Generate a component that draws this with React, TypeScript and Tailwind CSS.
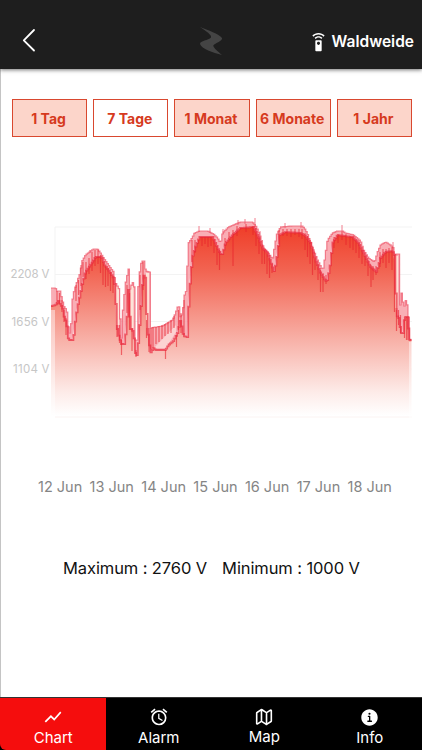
import React, { useState } from "react";
import { MdAccessAlarm, MdSettingsRemote, MdShowChart } from "react-icons/md";
import { IoInformationCircle, IoMapOutline } from "react-icons/io5";

type Point = [number, number];

const ranges = ["1 Tag", "7 Tage", "1 Monat", "6 Monate", "1 Jahr"];
const days = ["12 Jun", "13 Jun", "14 Jun", "15 Jun", "16 Jun", "17 Jun", "18 Jun"];

const tabs = [
  { label: "Chart", icon: MdShowChart, iconClass: "w-5 h-5", labelClass: "mt-px" },
  { label: "Alarm", icon: MdAccessAlarm, iconClass: "w-5 h-5", labelClass: "mt-px" },
  {
    label: "Map",
    icon: IoMapOutline,
    iconClass: "w-[18px] h-[18px] my-px [&_path]:stroke-[46px]",
    labelClass: "",
  },
  { label: "Info", icon: IoInformationCircle, iconClass: "w-[21px] h-[21px] -mb-px", labelClass: "mt-px" },
];

// Highest voltage per interval
const upper: Point[] = [
  [51, 288], [55, 288], [56, 291], [60, 291], [61, 298], [64, 308], [66, 309],
  [67, 317], [68.3, 333], [70.4, 333], [71, 305], [73, 293], [77, 280],
  [80, 272], [81, 262], [85, 255], [90, 251], [93, 249], [97, 249], [100, 253],
  [103, 258], [108, 265], [113, 272], [115, 283], [119, 290], [120, 338],
  [121.5, 338], [122.5, 307], [125, 283], [128, 269], [129, 290], [132, 282],
  [134, 288], [135, 340], [136.5, 340], [137.5, 290], [139, 273], [141, 261],
  [144, 261], [145, 271], [149, 272], [149.5, 328], [162, 326], [172, 320],
  [175, 313], [178, 304], [180, 318], [182, 313], [184, 295], [186, 290],
  [187, 260], [188, 243], [192, 237], [194, 233], [199, 231], [207, 231],
  [213, 234], [217, 238], [220, 243], [222, 233], [228, 227], [235, 224],
  [240, 222], [252, 222], [256, 227], [260, 237], [263, 248], [267, 252],
  [272, 259], [274, 247], [276, 235], [280, 227], [292, 226], [302, 226],
  [305, 230], [307, 234], [312, 248], [317, 260], [322, 270], [323, 267],
  [325, 253], [327, 240], [332, 233], [337, 231], [342, 231], [345, 233],
  [353, 235], [360, 241], [363, 250], [368, 258], [374, 262], [377, 252],
  [380, 245], [385, 242], [390, 245], [393, 248], [394, 254], [398.5, 254],
  [399, 310], [401, 293], [402, 297], [403, 310], [405, 300], [407, 306],
  [408, 317], [408.5, 339], [411, 340],
];

// Lowest voltage per interval
const lower: Point[] = [
  [51, 306], [55, 305], [58, 301], [60, 305], [62, 307], [63, 315], [66, 323],
  [68, 340], [73, 340], [74, 327], [77, 307], [80, 293], [82, 283], [85, 272],
  [92, 262], [95, 257], [101, 257], [104, 265], [108, 270], [113, 278],
  [115, 290], [116, 325], [118, 335], [121, 344], [124, 344], [126, 328],
  [128, 290], [130, 328], [133, 332], [135, 353], [137, 356], [138, 340],
  [140, 315], [142, 285], [143, 275], [145, 278], [146, 310], [147, 330],
  [150, 353], [153, 348], [155, 350], [165, 350], [168, 345], [173, 341],
  [177, 333], [180, 320], [183, 336], [187, 337], [188, 310], [190, 277],
  [192, 257], [195, 247], [199, 237], [212, 237], [214, 241], [218, 250],
  [220, 254], [222, 254], [225, 243], [232, 235], [240, 228], [253, 227],
  [257, 235], [262, 248], [267, 253], [272, 267], [274, 272], [277, 253],
  [279, 235], [285, 232], [300, 233], [305, 236], [310, 243], [315, 260],
  [320, 273], [325, 281], [327, 280], [330, 263], [332, 243], [337, 235],
  [352, 237], [358, 243], [363, 253], [370, 267], [376, 272], [380, 258],
  [385, 252], [392, 251], [394, 255], [396, 310], [397, 318], [399, 318],
  [400, 333], [403, 333], [404, 317], [407.5, 317], [408.5, 340], [411, 340],
];

// Short voltage drops hanging below the curve: x, top, bottom
const drops: [number, number, number][] = [
  [57, 291, 305], [59.5, 293, 304], [62, 300, 312], [64, 310, 322], [66, 318, 335],
  [76, 285, 301], [78.5, 280, 295], [81, 265, 286], [83, 262, 277], [86, 262, 279],
  [89, 258, 274], [92, 252, 271], [95, 250, 266], [98, 250, 264], [100.5, 255, 273],
  [103, 262, 285], [105.5, 266, 287], [108, 268, 286], [110.5, 272, 291],
  [113, 276, 293], [117, 325, 337], [119.5, 325, 343], [121.5, 340, 355],
  [127, 285, 313], [129.5, 293, 330], [132, 328, 351], [136, 350, 357],
  [140, 275, 310], [143, 262, 290], [146.5, 320, 338], [149, 328, 352],
  [151, 328, 349], [153, 327, 348], [156, 327, 344], [159, 326, 342],
  [162, 325, 339], [165.5, 350, 359], [165, 324, 336], [168, 322, 334],
  [171, 320, 333], [174, 316, 328], [176.5, 335, 347], [178.5, 310, 330],
  [181, 313, 333], [184, 300, 335], [192, 240, 262], [195, 240, 253],
  [202, 237, 246], [205, 237, 244], [208, 237, 247], [211, 237, 246],
  [214, 239, 253], [217, 246, 265], [219.5, 250, 270], [225, 238, 246],
  [229, 232, 240], [233, 230, 266], [237, 226, 236], [246, 224, 232],
  [253, 226, 235], [256, 228, 246], [259, 236, 254], [262, 246, 264],
  [264.5, 250, 264], [267, 254, 274], [269.5, 258, 278], [272, 264, 273],
  [279, 230, 244], [283, 229, 236], [287, 229, 236], [291, 229, 237],
  [295, 229, 235], [299, 229, 237], [302, 229, 239], [305, 233, 250],
  [307.5, 236, 257], [310, 242, 264], [312.5, 249, 275], [315, 258, 270],
  [318, 264, 280], [320.5, 270, 292], [323, 273, 292], [326, 275, 284],
  [334, 237, 248], [338, 234, 243], [342, 232, 240], [346, 234, 245],
  [350, 236, 248], [353, 237, 250], [356, 240, 253], [359, 243, 258],
  [362, 250, 264], [365, 256, 266], [368, 260, 276], [371, 265, 287],
  [373, 266, 280], [376, 266, 275], [380, 252, 267], [383, 249, 263],
  [386, 249, 268], [389, 248, 263], [392, 247, 270], [394.5, 255, 312],
  [396.5, 310, 331], [398.5, 310, 325], [400.5, 315, 333], [404.5, 317, 338],
  [406.5, 317, 340], [408, 317, 340],
];

// Peaks that stick out above the curve
const peaks: [number, number, number][] = [
  [90, 250, 253], [199, 226, 232], [210, 228, 233], [223, 229, 234],
  [238, 220, 225], [245, 219, 224], [255, 218, 228], [260, 231, 240],
  [285, 223, 228], [301, 222, 228], [342, 225, 232], [393, 242, 250],
];

const sample = (points: Point[], x: number) => {
  const i = points.findIndex((p) => p[0] >= x);
  if (i <= 0) return points[0][1];
  const [x0, y0] = points[i - 1];
  const [x1, y1] = points[i];
  return y0 + ((y1 - y0) * (x - x0)) / (x1 - x0);
};

const stepPath = (points: Point[]) => {
  let d = `M51 ${sample(points, 51)}`;
  for (let x = 52.4; x < 411; x += 1.4) {
    d += `H${x.toFixed(1)}V${sample(points, x).toFixed(1)}`;
  }
  return `${d}H411.5`;
};

const stepPathBack = (points: Point[]) => {
  let d = "";
  for (let x = 411; x >= 51; x -= 1.4) {
    d += `L${x.toFixed(1)} ${sample(points, x).toFixed(1)}`;
  }
  return d;
};

const bars = (list: [number, number, number][]) =>
  list.map(([x, top, bottom]) => `M${x} ${top}V${bottom}`).join("");

function VoltageChart() {
  const upperPath = stepPath(upper);
  const lowerPath = stepPath(lower);

  return (
    <svg viewBox="0 200 422 240" className="block w-full h-[240px]">
      <defs>
        <linearGradient id="area" gradientUnits="userSpaceOnUse" x1="0" y1="222" x2="0" y2="422">
          <stop offset="0" stopColor="#ef3a24" />
          <stop offset="0.25" stopColor="#f26553" />
          <stop offset="0.6" stopColor="#f8b3aa" />
          <stop offset="0.85" stopColor="#fdebe8" />
          <stop offset="0.97" stopColor="#ffffff" />
        </linearGradient>
      </defs>

      <path d="M55 227H412M55 274.5H412M55 321.5H412M55 369H412M55 227V417" stroke="#f3f3f3" fill="none" />

      <g fontFamily="Inter, sans-serif" fontSize="11.5" fill="#c6c6c6" textAnchor="end">
        <text x="49.5" y="278" textLength="39">2208 V</text>
        <text x="49.5" y="325.5" textLength="38">1656 V</text>
        <text x="49.5" y="373" textLength="36.5">1104 V</text>
      </g>

      <path d={`${lowerPath}V422H51Z`} fill="url(#area)" />
      <path d={`${upperPath}${stepPathBack(lower)}Z`} fill="#f79aa3" fillOpacity="0.8" />
      <path d="M116 286H119V325H116ZM130.5 286H133.5V328H130.5ZM146 273H149V328H146ZM395.5 256H398V308H395.5Z" fill="#fde3d8" />
      <path d="M154 348L176 325L176 332L166 348Z" fill="#fcd3d2" />
      <path d="M55 417H412" stroke="#fbf3f2" />
      <path d="M51 310H55V422H51ZM409 342H412V422H409Z" fill="#fff" fillOpacity="0.45" />

      <path d={upperPath} fill="none" stroke="#ee5468" strokeOpacity="0.7" strokeWidth="1.2" />
      <path d={bars(peaks)} stroke="#ee5468" strokeOpacity="0.75" />
      <path d={bars(drops)} stroke="#e8202c" strokeOpacity="0.6" strokeWidth="1.2" />
      <path d={lowerPath} fill="none" stroke="#e9283c" strokeOpacity="0.7" strokeWidth="1.8" />
    </svg>
  );
}

function Header() {
  return (
    <header className="relative z-10 grid grid-cols-3 items-end h-[69px] pb-[13px] bg-[#1e1e1e] text-white shadow-[0_1px_4px_rgba(0,0,0,0.55)]">
      <button className="ml-[22px] mb-1 w-3.5 h-[24px]" aria-label="Back">
        <svg viewBox="0 0 14 24" className="w-3.5 h-6" fill="none" stroke="currentColor" strokeWidth="1.8" strokeLinecap="round" strokeLinejoin="round">
          <path d="M12 2L1.8 12.3L12 22.5" />
        </svg>
      </button>
      <svg viewBox="0 0 24 30" className="justify-self-center w-6 h-[30px] fill-[#444]">
        <path d="M1 1C9 4 20 8 23 12C24 15 16 17 14.3 19.5C14 21.5 19 25.5 23 29C14 26.5 2.5 23 1 18C1 14.5 9.500 14.500 12 11.5C13 9 7 5 1 1Z" />
      </svg>
      <div className="flex items-center justify-end gap-1 pr-[8px] mb-[2px] whitespace-nowrap">
        <MdSettingsRemote className="w-[19px] h-[19px]" />
        <span className="text-[15.5px] leading-6 font-semibold">Waldweide</span>
      </div>
    </header>
  );
}

export default function App() {
  const [range, setRange] = useState("7 Tage");
  const [tab, setTab] = useState("Chart");

  return (
    <div className="flex flex-col w-[422px] h-[750px] overflow-hidden bg-white font-['Inter',sans-serif]">
      <Header />

      <main className="flex-1 border-l border-[#c4c4c4]">
        <div className="flex gap-[6px] pl-[11px] pr-[10px] pt-[30px]">
          {ranges.map((item) => (
            <button
              key={item}
              onClick={() => setRange(item)}
              className={`flex-1 basis-0 h-[38px] pr-0.5 border border-[#d9482f] text-[14px] font-bold text-[#d63a1e] whitespace-nowrap ${
                item === range ? "bg-white" : "bg-[#fcd5ca]"
              }`}
            >
              {item}
            </button>
          ))}
        </div>

        <div className="-ml-px mt-[63px]">
          <VoltageChart />
        </div>

        <div className="flex justify-between pl-[37px] pr-[30px] mt-[37px] text-[14.5px] leading-5 text-[#858585]">
          {days.map((day) => (
            <span key={day}>{day}</span>
          ))}
        </div>

        <div className="flex gap-[15px] pl-[62px] mt-[59px] text-[16.5px] leading-6 tracking-[-0.1px] text-[#111] whitespace-nowrap">
          <span>Maximum : 2760 V</span>
          <span>Minimum : 1000 V</span>
        </div>
      </main>

      <nav className="grid grid-cols-4 h-[53px] bg-black border-t border-[#333] text-white">
        {tabs.map(({ label, icon: Icon, iconClass, labelClass }) => (
          <button
            key={label}
            onClick={() => setTab(label)}
            className={`flex flex-col items-center pt-[9px] pl-px ${
              label === tab ? "bg-[#f50d0d] rounded-bl-md" : "bg-black"
            }`}
          >
            <Icon className={iconClass} />
            <span className={`text-[15px] leading-5 ${labelClass}`}>{label}</span>
          </button>
        ))}
      </nav>
    </div>
  );
}
